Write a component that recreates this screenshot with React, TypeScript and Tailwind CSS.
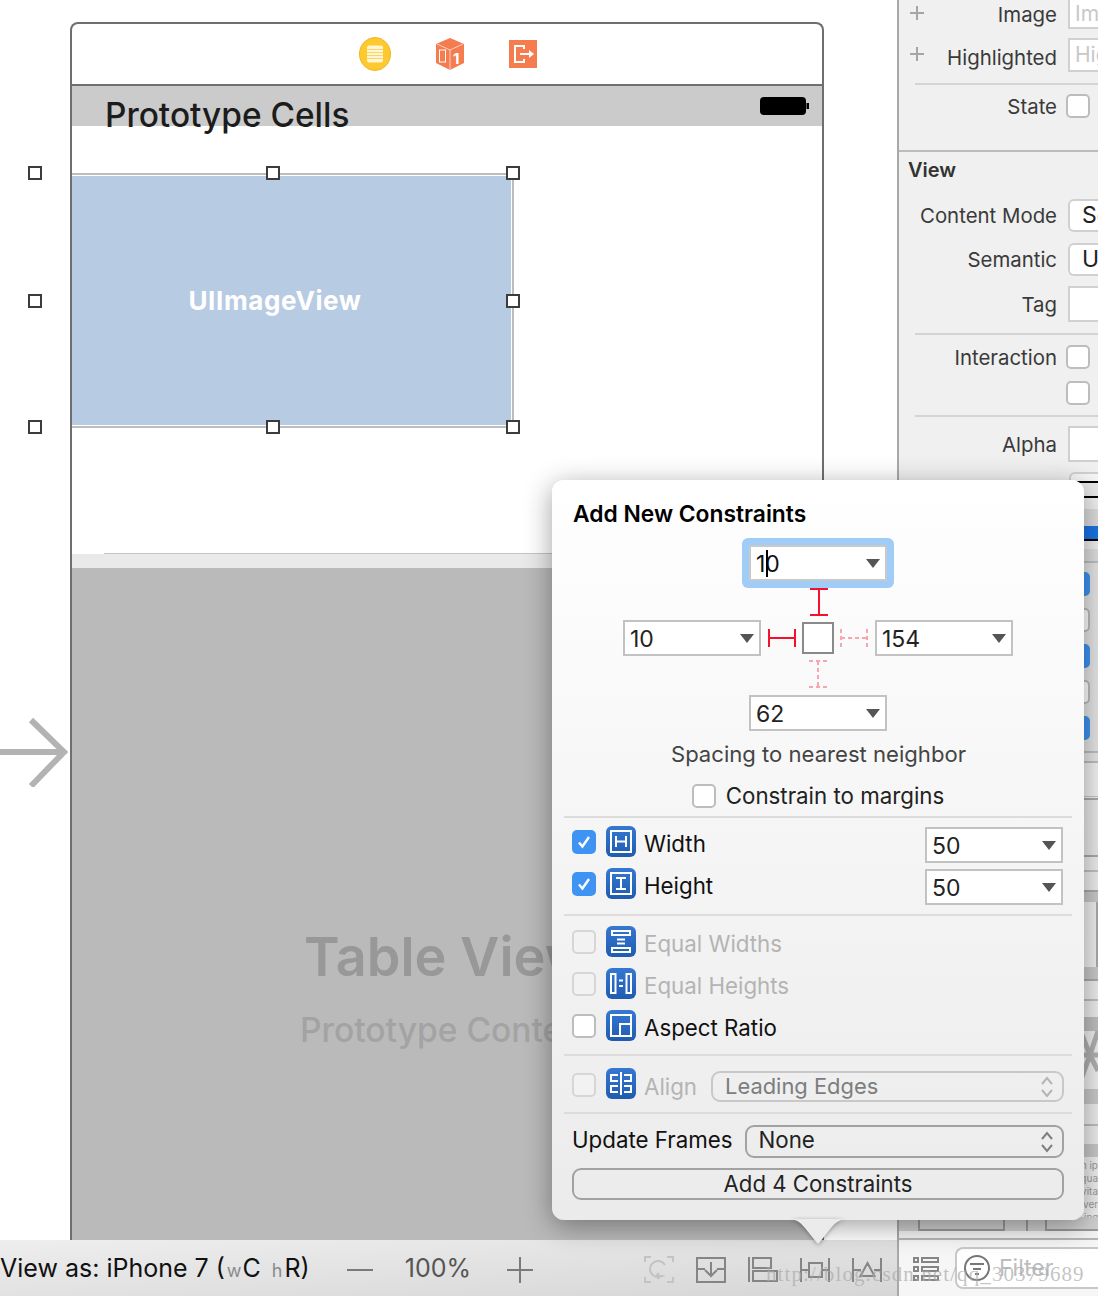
const ink = "text-[#222]";

function Tri() {
  return (
    <svg width="14" height="9" viewBox="0 0 14 9" className="shrink-0">
      <path d="M0 0h14L7 9z" fill="#555" />
    </svg>
  );
}

function Stepper({ color = "#6f6f6f" }: { color?: string }) {
  return (
    <svg width="14" height="22" viewBox="0 0 14 22" fill="none" stroke={color} strokeWidth="2" className="shrink-0">
      <path d="M2 8l5-6 5 6M2 14l5 6 5-6" />
    </svg>
  );
}

function Field({ value, className = "" }: { value: string; className?: string }) {
  return (
    <div className={`w-[138px] h-[36px] shrink-0 flex items-center justify-between pl-[5px] pr-[5px] bg-white border-2 border-[#c2c2c2] text-[23px] ${ink} ${className}`}>
      <span className="pt-[2px]">{value}</span>
      <Tri />
    </div>
  );
}

function Check({ state = "off", className = "" }: { state?: "on" | "off" | "dim"; className?: string }) {
  if (state === "on") {
    return (
      <div className={`w-[24px] h-[24px] shrink-0 rounded-[5px] bg-[#3f93f3] flex items-center justify-center ${className}`}>
        <svg width="16" height="16" viewBox="0 0 16 16" fill="none" stroke="white" strokeWidth="2.4">
          <path d="M3 8.5l3.4 4L13 3" />
        </svg>
      </div>
    );
  }
  const look = state === "dim" ? "bg-[#f2f2f2] border-[#d6d6d6]" : "bg-white border-[#bdbdbd]";
  return <div className={`w-[24px] h-[24px] shrink-0 rounded-[5px] border-2 ${look} ${className}`} />;
}

function BlueIcon({ children }: { children: React.ReactNode }) {
  return (
    <svg width="30" height="31" viewBox="0 0 30 31" className="shrink-0" fill="none" stroke="white" strokeWidth="2">
      <defs>
        <linearGradient id="blueFill" x1="0" y1="0" x2="0" y2="1">
          <stop offset="0" stopColor="#3578d2" />
          <stop offset="1" stopColor="#1f5cb0" />
        </linearGradient>
      </defs>
      <rect width="30" height="31" rx="6" fill="url(#blueFill)" stroke="none" />
      {children}
    </svg>
  );
}

const widthIcon = (
  <>
    <rect x="5" y="5" width="20" height="21" />
    <path d="M10 10v11M20 10v11M10 15.5h10" />
  </>
);
const heightIcon = (
  <>
    <rect x="5" y="5" width="20" height="21" />
    <path d="M10 10h10M10 21h10M15 10v11" />
  </>
);
const equalWidthsIcon = (
  <>
    <rect x="6" y="5" width="18" height="4" />
    <rect x="6" y="22" width="18" height="4" />
    <path d="M11 13.5h8M11 17.5h8" />
  </>
);
const equalHeightsIcon = (
  <>
    <rect x="5" y="6" width="4.5" height="19" />
    <rect x="20.5" y="6" width="4.5" height="19" />
    <path d="M13 12.5h4M13 18h4" />
  </>
);
const aspectIcon = (
  <>
    <rect x="5" y="5" width="20" height="21" />
    <rect x="14" y="14" width="11" height="12" />
  </>
);
const alignIcon = (
  <>
    <path d="M15 4v23" />
    <path d="M12 7H5v6h7M12 18H5v6h7M18 7h7v6h-7M18 18h7v6h-7" />
  </>
);

function OptionRow({ icon, label, state, dim }: { icon: React.ReactNode; label: string; state: "on" | "off" | "dim"; dim?: boolean }) {
  return (
    <div className="h-[42px] flex items-center">
      <Check state={state} />
      <div className="ml-[10px] mr-[8px] -mt-[2px]">
        <BlueIcon>{icon}</BlueIcon>
      </div>
      <span className={`text-[22.3px] pt-[4px] ${dim ? "text-[#b4b4b4]" : "text-[#111]"}`}>{label}</span>
    </div>
  );
}

function Divider({ className = "" }: { className?: string }) {
  return <div className={`h-[2px] bg-[#dcdcdc] ${className}`} />;
}

function Popover() {
  return (
    <div className="absolute left-[552px] top-[480px] w-[532px] h-[740px] rounded-[12px] bg-gradient-to-b from-white to-[#ebebeb] shadow-[0_6px_28px_rgba(0,0,0,0.38)] px-[12px] pt-[21px]">
      <div className="pl-[9px] h-[25px] leading-[25px] text-[22.8px] font-semibold text-black whitespace-nowrap">Add New Constraints</div>

      <div className="flex flex-col items-center mt-[12px]">
        <div className="w-[152px] h-[50px] rounded-[6px] bg-[#a0ccf8] p-[7px]">
          <div className="relative w-[138px] h-[36px] flex items-center justify-between pl-[5px] pr-[5px] bg-white border-2 border-[#c9c9c9] text-[23px] text-[#111]">
            <span className="pt-[2px]">10</span>
            <Tri />
            <div className="absolute left-[15px] top-[3px] w-[2px] h-[27px] bg-black" />
          </div>
        </div>
        <svg width="18" height="28" viewBox="0 0 18 28" fill="none" stroke="#f5102e" strokeWidth="2" className="ml-[2px]">
          <path d="M0 1h18M0 27h18M9 1v26" />
        </svg>
        <div className="flex items-center mt-[4px]">
          <Field value="10" />
          <svg width="28" height="18" viewBox="0 0 28 18" fill="none" stroke="#f5102e" strokeWidth="2" className="ml-[7px]">
            <path d="M1 0v18M27 0v18M1 9h26" />
          </svg>
          <div className="w-[32px] h-[32px] mx-[6px] bg-white border-2 border-[#8a8a8a]" />
          <svg width="28" height="18" viewBox="0 0 28 18" fill="none" stroke="#f8a6ae" strokeWidth="2" strokeDasharray="4 3" className="mr-[7px]">
            <path d="M1 0v18M27 0v18M1 9h26" />
          </svg>
          <Field value="154" />
        </div>
        <svg width="18" height="28" viewBox="0 0 18 28" fill="none" stroke="#f8a6ae" strokeWidth="2" strokeDasharray="4 3" className="mt-[4px]">
          <path d="M0 1h18M0 27h18M9 1v26" />
        </svg>
        <Field value="62" className="mt-[7px]" />
        <div className="mt-[10px] h-[26px] leading-[26px] text-[22.1px] text-[#444] ml-[1px] whitespace-nowrap">Spacing to nearest neighbor</div>
        <div className="mt-[17px] h-[24px] flex items-center gap-[10px]">
          <Check />
          <span className="text-[22.3px] text-[#222]">Constrain to margins</span>
        </div>
      </div>

      <Divider className="mt-[8px]" />

      <div className="mt-[3px] pl-[8px] pr-[9px] flex justify-between">
        <div>
          <OptionRow icon={widthIcon} label="Width" state="on" />
          <OptionRow icon={heightIcon} label="Height" state="on" />
        </div>
        <div className="flex flex-col">
          <Field value="50" className="mt-[6px]" />
          <Field value="50" className="mt-[6px]" />
        </div>
      </div>

      <Divider className="mt-[9px]" />

      <div className="mt-[5px] pl-[8px]">
        <OptionRow icon={equalWidthsIcon} label="Equal Widths" state="dim" dim />
        <OptionRow icon={equalHeightsIcon} label="Equal Heights" state="dim" dim />
        <OptionRow icon={aspectIcon} label="Aspect Ratio" state="off" />
      </div>

      <Divider className="mt-[7px]" />

      <div className="mt-[15px] h-[31px] pl-[8px] pr-[8px] flex items-center">
        <Check state="dim" className="-mt-[3px]" />
        <div className="ml-[10px] mr-[8px] -mt-[6px]">
          <BlueIcon>{alignIcon}</BlueIcon>
        </div>
        <span className="text-[22.3px] text-[#b4b4b4]">Align</span>
        <div className="ml-[14px] flex-1 h-[31px] rounded-[9px] border-2 border-[#c8c8c8] flex items-center justify-between pl-[12px] pr-[8px] text-[21.9px] text-[#7d7d7d]">
          <span>Leading Edges</span>
          <Stepper color="#b5b5b5" />
        </div>
      </div>

      <Divider className="mt-[10px]" />

      <div className="mt-[11px] h-[33px] pl-[8px] pr-[8px] flex items-center">
        <span className="text-[22.3px] text-[#111] -mt-[3px]">Update Frames</span>
        <div className="ml-[12px] flex-1 h-[33px] rounded-[9px] border-2 border-[#a2a2a2] flex items-center justify-between pl-[12px] pr-[8px] text-[22.3px] text-[#222]">
          <span className="-mt-[3px]">None</span>
          <Stepper color="#7f7f7f" />
        </div>
      </div>

      <div className="mt-[10px] ml-[8px] mr-[8px] h-[32px] rounded-[9px] border-2 border-[#a2a2a2] flex items-center justify-center text-[22.2px] text-[#222]">
        Add 4 Constraints
      </div>

      <svg width="60" height="26" viewBox="0 0 60 26" className="absolute left-[236px] top-[739px] drop-shadow-[0_1px_2px_rgba(0,0,0,0.35)]">
        <path d="M0 0h60c-8 0-12 3-17 9L31 24q-1 1-2 0L17 9C12 3 8 0 0 0z" fill="#ebebeb" />
      </svg>
    </div>
  );
}

function Handle({ className }: { className: string }) {
  return <div className={`absolute w-[14px] h-[14px] bg-white border-2 border-[#3c3c3c] ${className}`} />;
}

function DeviceHeader() {
  return (
    <div className="h-[62px] shrink-0 flex items-center justify-center gap-[45px] pl-[2px] border-b-2 border-[#6f6f6f]">
      <svg width="32" height="34" viewBox="0 0 32 34">
        <ellipse cx="16" cy="17" rx="15.5" ry="16.5" fill="#fdc92f" stroke="#eeb62a" />
        <rect x="8" y="8.5" width="16" height="17" rx="2" fill="#fff6d2" />
        <path d="M8 12.5h16M8 15.5h16M8 18.5h16M8 21.5h16" stroke="#fdd268" strokeWidth="1" />
      </svg>
      <svg width="28" height="32" viewBox="0 0 28 32">
        <path d="M14 0l14 6v19l-14 7-14-7V6z" fill="#f57c4f" />
        <path d="M1 6l13 6 13-6M14 12v20" fill="none" stroke="#fbd0bd" strokeWidth="1" />
        <rect x="3.5" y="12" width="6" height="12" fill="none" stroke="#fff" strokeWidth="1" />
        <text x="17" y="26" fontSize="15" fontWeight="700" fill="#fff" fontFamily="Inter, sans-serif">1</text>
      </svg>
      <svg width="28" height="28" viewBox="0 0 28 28">
        <rect width="28" height="28" fill="#f57c4f" />
        <path d="M15 9V6H6v16h9v-3" fill="none" stroke="#fff" strokeWidth="2" />
        <path d="M11 14h10" stroke="#fff" strokeWidth="2" />
        <path d="M20 10l5 4-5 4z" fill="#fff" />
      </svg>
    </div>
  );
}

function Device() {
  return (
    <div className="w-[754px] flex-1 flex flex-col border-x-2 border-t-2 border-[#6f6f6f] rounded-t-[8px] overflow-hidden">
      <DeviceHeader />
      <div className="relative z-10 h-[40px] shrink-0 bg-[#cbcbcb] pl-[33px] flex justify-between pr-[12px]">
        <span className="text-[33.4px] leading-[58px] h-[40px] font-medium text-[#1c1c1c] whitespace-nowrap">Prototype Cells</span>
        <svg width="50" height="20" viewBox="0 0 50 20" className="mt-[10px]">
          <rect width="46" height="18" y="1" rx="4" fill="#000" />
          <rect x="46.5" y="7" width="2.5" height="6" fill="#000" />
        </svg>
      </div>
      <div className="h-[428px] shrink-0 bg-white pt-[50px] relative">
        <div className="w-[439px] h-[249px] bg-[#b7cbe3] outline-2 outline-offset-1 outline-[#bdbdbd] flex items-center justify-center pr-[33px]">
          <span className="text-[26px] font-bold tracking-[0.6px] text-white">UIImageView</span>
        </div>
        <div className="absolute left-[32px] right-0 bottom-0 h-[1px] bg-[#c4c4c4]" />
      </div>
      <div className="h-[14px] shrink-0 bg-[#e9e9e9]" />
      <div className="flex-1 bg-[#bababa] flex flex-col items-center pt-[355px]">
        <div className="text-[54px] leading-[68px] font-semibold text-[#989898] whitespace-nowrap">Table View</div>
        <div className="mt-[19px] text-[33.6px] leading-[40px] font-medium text-[#a3a3a3] whitespace-nowrap">Prototype Content</div>
      </div>
    </div>
  );
}

function Canvas() {
  return (
    <div className="relative flex-1 min-h-0 bg-white pl-[70px] pt-[22px] flex flex-col">
      <Device />
      <Handle className="left-[28px] top-[166px]" />
      <Handle className="left-[266px] top-[166px]" />
      <Handle className="left-[506px] top-[166px]" />
      <Handle className="left-[28px] top-[294px]" />
      <Handle className="left-[506px] top-[294px]" />
      <Handle className="left-[28px] top-[420px]" />
      <Handle className="left-[266px] top-[420px]" />
      <Handle className="left-[506px] top-[420px]" />
      <svg width="68" height="70" viewBox="0 0 68 70" className="absolute left-0 top-[717px]" fill="none" stroke="#b3b3b3" strokeWidth="6">
        <path d="M0 35h62M31 3l33 32-33 34" />
      </svg>
    </div>
  );
}

function BarIcons() {
  return (
    <div className="flex items-center gap-[22px] ml-[auto] mr-[15px] pt-[3px]">
      <svg width="30" height="27" viewBox="0 0 30 27" fill="none" stroke="#c3c3c3" strokeWidth="2">
        <path d="M1 6V1h6M23 1h6v5M29 21v5h-6M7 26H1v-5" />
        <path d="M21 9a8 8 0 1 0-3 11h-6M15 17l-3 3 3 3" />
      </svg>
      <svg width="30" height="27" viewBox="0 0 30 27" fill="none" stroke="#858585" strokeWidth="2">
        <path d="M1 2h28v24H1zM1 13h8M21 13h8M15 6v14M9 14l6 6 6-6" />
      </svg>
      <svg width="30" height="27" viewBox="0 0 30 27" fill="none" stroke="#858585" strokeWidth="2">
        <path d="M1 1v25M5 2h18v10H5zM5 15h24v10H5z" />
      </svg>
      <svg width="30" height="27" viewBox="0 0 30 27" fill="none" stroke="#858585" strokeWidth="2">
        <path d="M1 2v24M29 2v24M1 14h8M22 14h7M9 7h13v14H9z" />
      </svg>
      <svg width="30" height="27" viewBox="0 0 30 27" fill="none" stroke="#858585" strokeWidth="2">
        <path d="M1 2v24M29 2v24M1 14h8M22 14h7M15.5 7l7 13h-14z" />
      </svg>
    </div>
  );
}

function BottomBar() {
  return (
    <div className="h-[56px] shrink-0 bg-gradient-to-br from-[#eeeeee] to-[#d6d6d6] flex items-center">
      <div className="text-[25px] text-[#111] whitespace-nowrap flex items-baseline pt-[1px]">
        <span>View as: iPhone 7 (</span>
        <span className="text-[18px] text-[#8a8a8a] ml-[2px] mr-[1px]">w</span>
        <span>C</span>
        <span className="text-[18px] text-[#8a8a8a] ml-[11px] mr-[2px]">h</span>
        <span>R)</span>
      </div>
      <div className="ml-[37px] mt-[3px] w-[26px] h-[2px] bg-[#7a7a7a]" />
      <span className="ml-[32px] pt-[2px] text-[25px] text-[#555]">100%</span>
      <svg width="26" height="26" viewBox="0 0 26 26" stroke="#7a7a7a" strokeWidth="2" className="ml-[36px] mt-[3px]">
        <path d="M0 13h26M13 0v26" />
      </svg>
      <BarIcons />
    </div>
  );
}

function Label({ children, plus, drop = "pt-[2px]" }: { children?: React.ReactNode; plus?: boolean; drop?: string }) {
  return (
    <div className="w-[158px] shrink-0 pl-[11px] flex items-center justify-between whitespace-nowrap">
      {plus ? (
        <svg width="14" height="14" viewBox="0 0 14 14" stroke="#a5a5a5" strokeWidth="2" className="-mt-[3px]">
          <path d="M0 7h14M7 0v14" />
        </svg>
      ) : (
        <span />
      )}
      <span className={`text-[20.4px] text-[#3a3a3a] ${drop}`}>{children}</span>
    </div>
  );
}

function InspectorRow({ label, plus, drop, h, mt, control }: { label?: string; plus?: boolean; drop?: string; h: string; mt: string; control: React.ReactNode }) {
  return (
    <div className={`flex items-center ${h} ${mt}`}>
      <Label plus={plus} drop={drop}>{label}</Label>
      <div className="ml-[9px] min-w-0 flex-1 self-stretch">{control}</div>
    </div>
  );
}

function Sep({ className }: { className: string }) {
  return <div className={`ml-[16px] h-[2px] bg-[#d4d4d4] ${className}`} />;
}

function Inspector() {
  const box = "ml-[2px] h-full bg-white border-2 border-r-0 border-[#d0d0d0]";
  const hint = "text-[21px] text-[#c8c8c8] pl-[5px] flex items-center whitespace-nowrap overflow-hidden";
  const pop = "ml-[2px] h-full bg-white border-2 border-r-0 border-[#d0d0d0] rounded-l-[6px] text-[23px] text-[#222] pl-[12px] flex items-center whitespace-nowrap overflow-hidden";
  return (
    <div className="flex-1 min-h-0 bg-[#f0f0f0] overflow-hidden flex flex-col">
      <InspectorRow label="Image" plus h="h-[29px]" mt="mt-0" control={<div className={`${box} border-t-0 ${hint}`}>Image</div>} />
      <InspectorRow label="Highlighted" plus drop="pt-[7px]" h="h-[34px]" mt="mt-[9px]" control={<div className={`${box} ${hint}`}>Highlighted</div>} />
      <Sep className="mt-[11px]" />
      <InspectorRow label="State" h="h-[24px]" mt="mt-[9px]" control={<Check />} />
      <div className="mt-[32px] h-[2px] bg-[#bcbcbc]" />
      <div className="mt-[6px] pl-[9px] h-[24px] leading-[24px] text-[20px] font-semibold text-[#333]">View</div>
      <InspectorRow label="Content Mode" h="h-[33px]" mt="mt-[17px]" control={<div className={pop}>Scale To Fill</div>} />
      <InspectorRow label="Semantic" h="h-[33px]" mt="mt-[11px]" control={<div className={pop}>Unspecified</div>} />
      <InspectorRow label="Tag" h="h-[36px]" mt="mt-[10px]" control={<div className={box} />} />
      <Sep className="mt-[11px]" />
      <InspectorRow label="Interaction" h="h-[24px]" mt="mt-[10px]" control={<Check />} />
      <InspectorRow h="h-[24px]" mt="mt-[12px]" control={<Check />} />
      <Sep className="mt-[10px]" />
      <InspectorRow label="Alpha" h="h-[36px]" mt="mt-[9px]" control={<div className={box} />} />

      {/* everything from here down only peeks out right of the popover */}
      <div className="mt-[10px] ml-[170px] h-[9px] rounded-tl-[6px] border-t-2 border-l-2 border-[#d0d0d0] bg-[#f6f6f6]" />
      <div className="h-[2px] bg-black" />
      <div className="h-[13px] bg-[#e9e9e9]" />
      <div className="h-[2px] bg-black" />
      <div className="h-[11px] bg-[#f0f0f0]" />
      <div className="h-[17px] bg-[#dcdcdc]" />
      <div className="h-[13px] bg-[#1b74e4]" />
      <div className="h-[2px] bg-black" />
      <div className="h-[8px] bg-[#eeeeee]" />
      <div className="h-[12px] bg-[#dddddd]" />
      <div className="h-[2px] bg-[#bdbdbd]" />
      <div className="pl-[167px] pt-[9px] pb-[11px] flex flex-col gap-[12px] bg-[#e4e4e4]">
        <Check state="on" />
        <Check />
        <Check state="on" />
        <Check />
        <Check state="on" />
      </div>
      <div className="h-[2px] bg-[#bdbdbd]" />
      <div className="h-[8px] bg-[#e6e6e6]" />
      <div className="h-[2px] bg-[#bdbdbd]" />
      <div className="h-[33px] bg-[#f0f0f0]" />
      <div className="h-[1px] bg-[#c4c4c4]" />
      <div className="h-[2px] mt-[1px] bg-[#a9a9a9]" />
      <div className="h-[55px] bg-[#e8e8e8]" />
      <div className="h-[2px] bg-[#a9a9a9]" />
      <div className="h-[13px] bg-[#ececec]" />
      <div className="h-[2px] bg-[#c0c0c0]" />
      <div className="h-[18px] bg-[#ececec]" />
      <div className="h-[12px] bg-[#c8c8c8] border-t-2 border-[#a9a9a9]" />
      <div className="h-[65px] bg-[#eeeeee] border-r-2 border-[#a9a9a9]" />
      <div className="h-[14px] bg-[#c8c8c8] border-b-2 border-[#a9a9a9]" />
      <div className="h-[18px] bg-[#ececec]" />
      <div className="h-[2px] bg-[#bdbdbd]" />
      <div className="h-[16px] bg-[#ececec]" />
      <div className="h-[14px] bg-[#bebebe]" />
      <div className="h-[58px] bg-[#eeeeee] flex justify-end">
        <svg width="16" height="58" viewBox="0 0 16 58" fill="none" stroke="#b0b0b0" strokeWidth="5">
          <path d="M0 4l8 20 8-24M0 46l8-22 8 16M0 24h16" />
        </svg>
      </div>
      <div className="h-[15px] bg-[#c8c8c8]" />
      <div className="h-[20px] bg-[#ececec]" />
      <div className="h-[2px] bg-[#bdbdbd]" />
      <div className="h-[18px] bg-[#ececec]" />
      <div className="h-[13px] bg-[#c8c8c8]" />
      <div className="h-[60px] bg-[#eeeeee] text-[10px] leading-[13px] text-[#9a9a9a] flex flex-col items-end pt-[2px] overflow-hidden whitespace-nowrap">
        <span>m ip</span>
        <span>qua</span>
        <span>vita</span>
        <span>ver</span>
        <span className="self-start pl-[185px]">ing</span>
      </div>
      <div className="h-[14px] bg-[#d0d0d0] flex">
        <div className="ml-[19px] w-[87px] border-x-2 border-b-2 border-[#9a9a9a]" />
        <div className="ml-[21px] w-[2px] bg-[#9a9a9a]" />
        <div className="ml-[17px] flex-1 border-l-2 border-b-2 border-[#9a9a9a]" />
      </div>
      <div className="flex-1 border-b-2 border-[#b5b5b5] bg-[#f4f4f4]" />
    </div>
  );
}

function FilterBar() {
  return (
    <div className="h-[56px] shrink-0 bg-[#f6f6f6] flex items-center pl-[14px]">
      <svg width="26" height="25" viewBox="0 0 26 25" fill="none" stroke="#858585" strokeWidth="2">
        <path d="M1 2h4v4H1zM9 2h16v4H9zM1 11h4v4H1zM9 11h16v4H9zM1 20h4v4H1zM9 20h16v4H9z" />
      </svg>
      <div className="ml-[16px] flex-1 h-[42px] rounded-l-[8px] border-2 border-r-0 border-[#c8c8c8] bg-white flex items-center pl-[6px]">
        <svg width="28" height="28" viewBox="0 0 28 28" fill="none" stroke="#777" strokeWidth="2">
          <circle cx="14" cy="14" r="12" />
          <path d="M7 10h14M10 15h8M12 20h4" />
        </svg>
        <span className="ml-[8px] text-[23px] text-[#bdbdbd]">Filter</span>
      </div>
    </div>
  );
}

export default function App() {
  return (
    <div className="relative w-[1098px] h-[1296px] overflow-hidden flex bg-white [font-family:Inter,'Noto_Sans',sans-serif]">
      <div className="w-[897px] shrink-0 flex flex-col">
        <Canvas />
        <BottomBar />
      </div>
      <div className="flex-1 min-w-0 border-l-2 border-[#a9a9a9] flex flex-col">
        <Inspector />
        <FilterBar />
      </div>
      <Popover />
      <div className="absolute left-[766px] top-[1259px] text-[21px] tracking-[1.1px] text-[#aaaaaa]/70 [font-family:'Liberation_Serif',serif] whitespace-nowrap">
        http://blog.csdn.net/qq_30379689
      </div>
    </div>
  );
}
